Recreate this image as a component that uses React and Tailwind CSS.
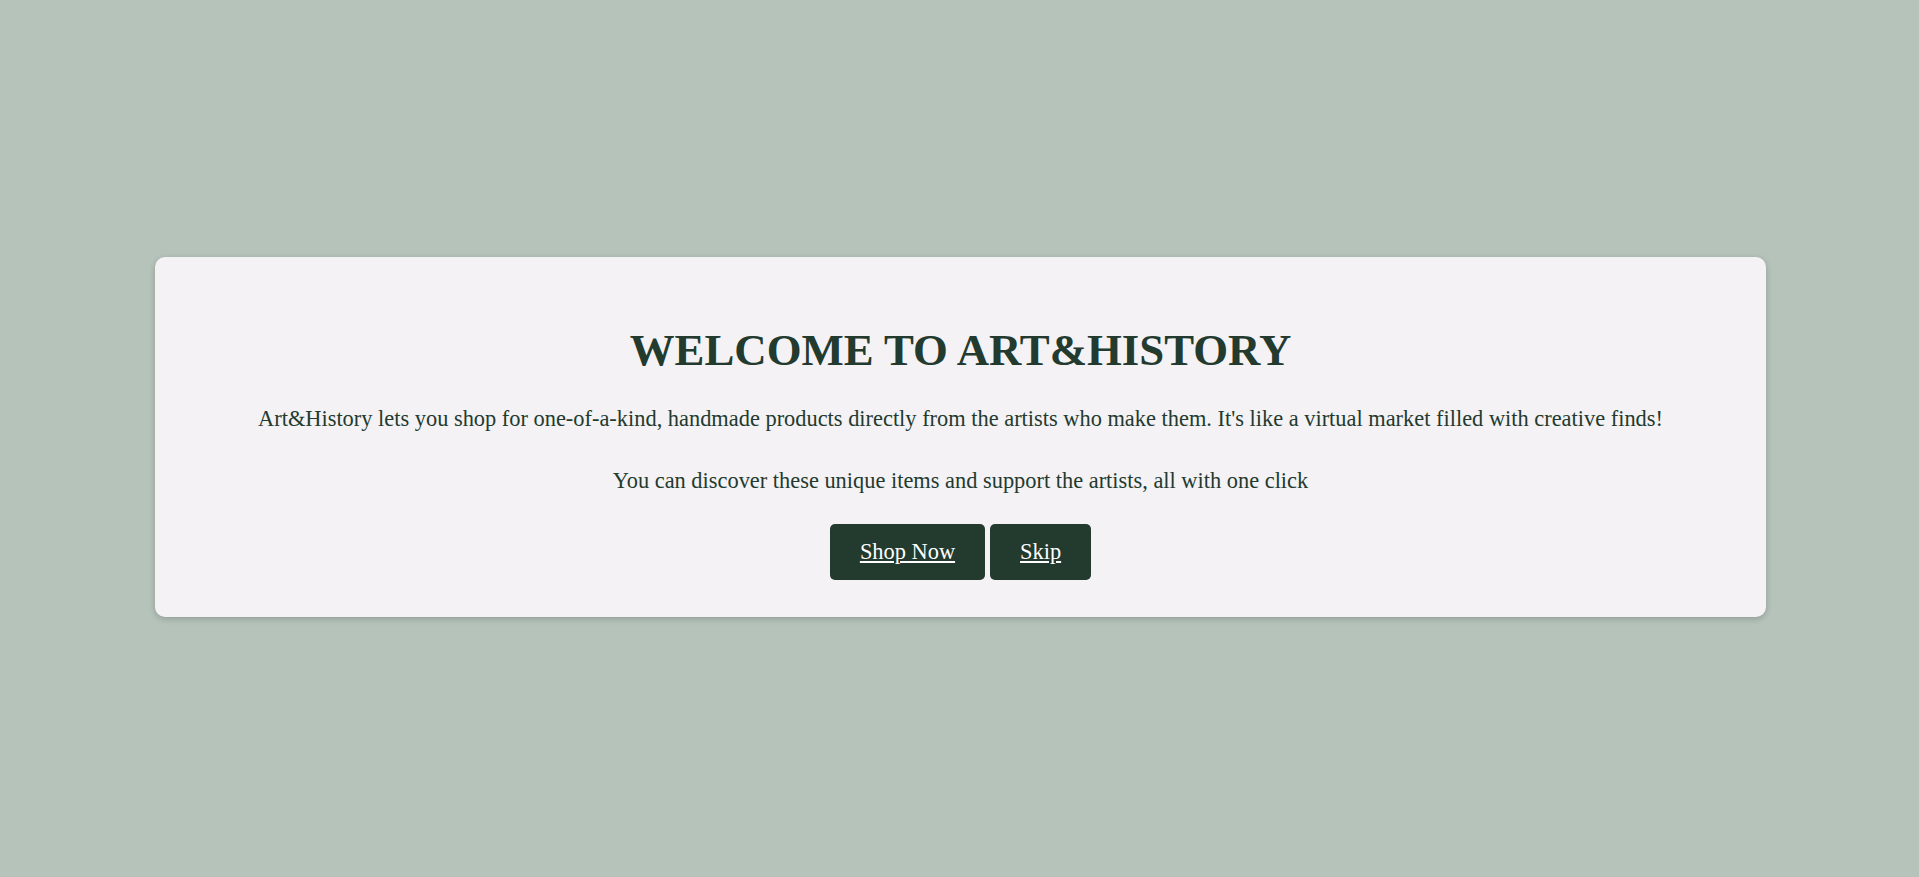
export default function App() {
  return (
    <div className="min-h-screen w-full bg-[#b5c3bb] flex items-center justify-center" style={{ fontFamily: '"Liberation Serif", "Times New Roman", serif' }}>
      <div className="ml-[2px] mb-[3px] w-[1611px] rounded-[10px] bg-[#f4f2f5] px-[30px] pt-[68px] pb-[37px] text-center text-[#233a2e] shadow-[0_2px_6px_rgba(0,0,0,0.2)]">
        <h1 className="mb-[30px] text-[44.8px] font-bold leading-[51px]">WELCOME TO ART&amp;HISTORY</h1>
        <p className="text-[22.4px] leading-[26px] mb-[36px]">
          Art&amp;History lets you shop for one-of-a-kind, handmade products directly from the artists who make them. It's like a virtual market filled with creative finds!
        </p>
        <p className="text-[22.4px] leading-[26px] mb-[30px]">
          You can discover these unique items and support the artists, all with one click
        </p>
        <div className="flex justify-center gap-[5px]">
          <a href="#" className="inline-flex h-[56px] items-center justify-center rounded-[5px] bg-[#233a2e] px-[30px] text-[22.4px] leading-[26px] text-white underline">Shop Now</a>
          <a href="#" className="inline-flex h-[56px] items-center justify-center rounded-[5px] bg-[#233a2e] px-[30px] text-[22.4px] leading-[26px] text-white underline">Skip</a>
        </div>
      </div>
    </div>
  );
}
